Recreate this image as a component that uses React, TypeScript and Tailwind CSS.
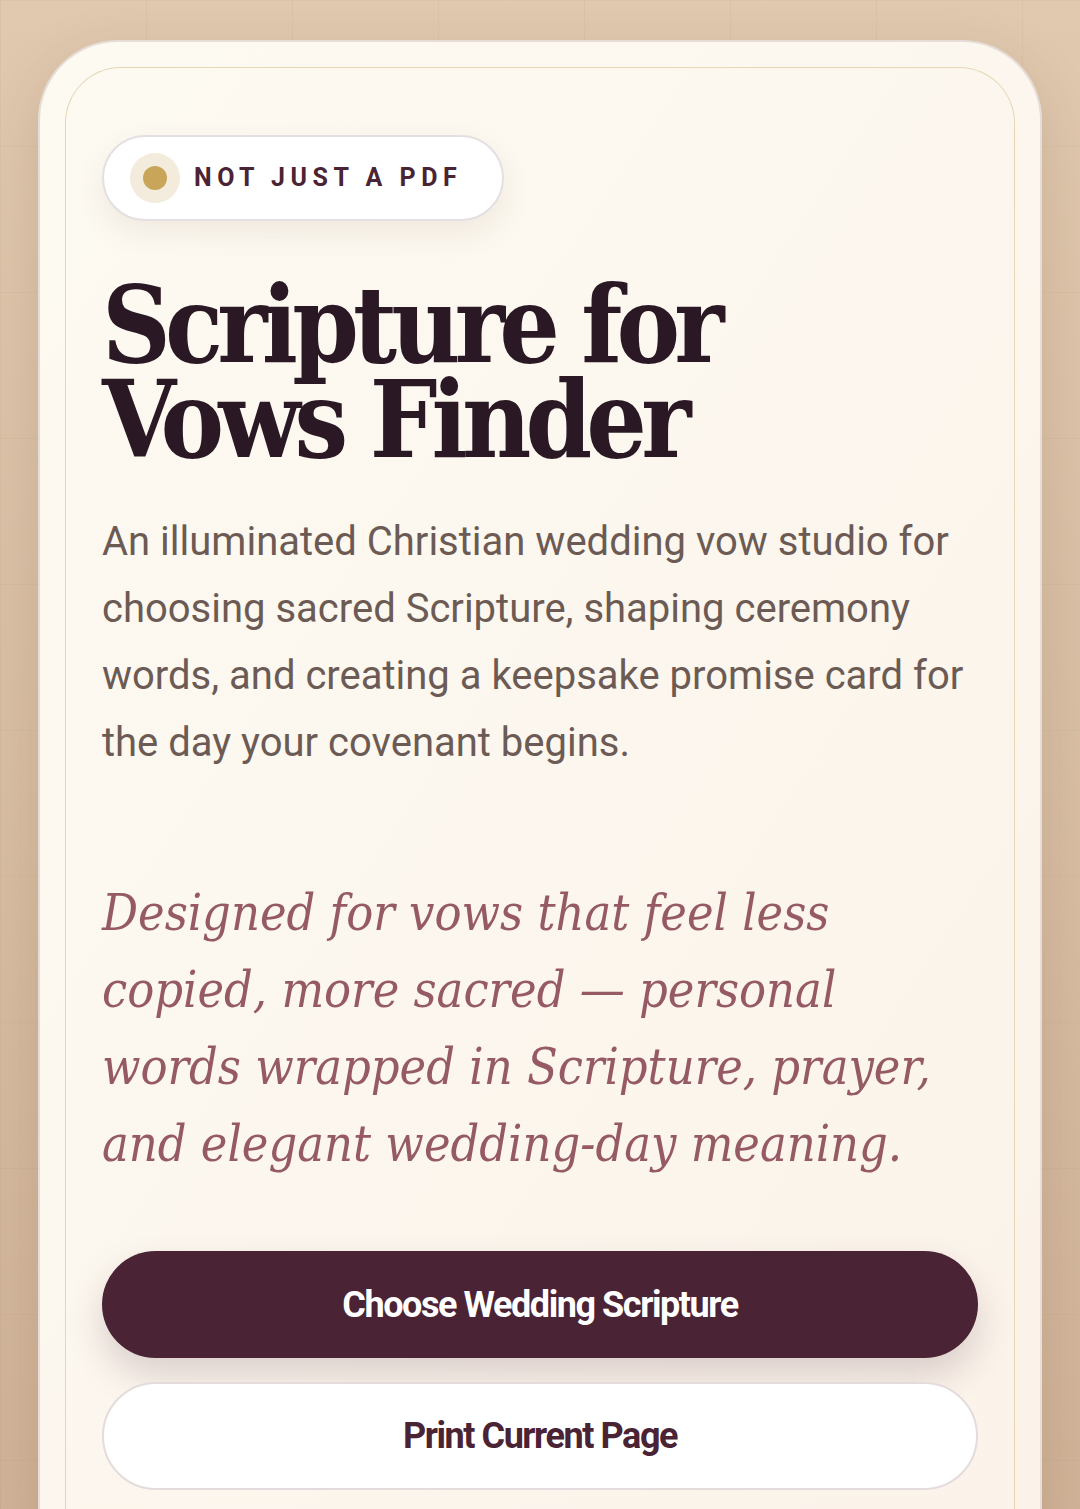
import React from "react";

export default function App() {
  return (
    <div className="relative min-h-[1509px] w-full overflow-hidden bg-gradient-to-b from-[#e0c9af] via-[#d9bfa4] to-[#d0b398]">
      <div className="pointer-events-none absolute inset-0 bg-[linear-gradient(to_right,rgba(120,80,40,0.05)_1px,transparent_1px),linear-gradient(to_bottom,rgba(120,80,40,0.04)_1px,transparent_1px)] bg-[size:146px_146px]" />
      <div className="relative px-[38px] pt-[40px]">
        <div className="rounded-t-[80px] border-2 border-b-0 border-[#e6ddd8] bg-gradient-to-br from-[#fdfaf2] to-[#fbf3ea] p-[25px] pb-0 shadow-[0_20px_60px_rgba(90,50,30,0.15)]">
          <div className="min-h-[1460px] rounded-t-[56px] border border-b-0 border-[#e5d7b5] px-[36px] pt-[67px]">
            <div className="inline-flex h-[86px] items-center rounded-full border-2 border-[#e4dfe1] bg-white pl-[26px] pr-[40px] shadow-[0_12px_30px_rgba(90,50,30,0.08)]">
              <span className="flex h-[50px] w-[50px] items-center justify-center rounded-full bg-[#f3ebdc]">
                <span className="h-[24px] w-[24px] rounded-full bg-[#c9a55a]" />
              </span>
              <span className="ml-[14px] font-['Roboto'] text-[25px] font-bold tracking-[0.22em] text-[#4a2335]">
                NOT JUST A PDF
              </span>
            </div>
            <h1 className="mt-[56px] font-['DejaVu_Serif',serif] text-[106px] font-bold leading-[95px] tracking-[-0.055em] text-[#2a1824] [font-stretch:condensed]">
              Scripture for
              <br />
              Vows Finder
            </h1>
            <p className="mt-[41px] max-w-[872px] font-['Roboto',sans-serif] text-[40px] leading-[67px] text-[#6c5b54]">
              An illuminated Christian wedding vow studio for choosing sacred Scripture, shaping ceremony words, and creating a keepsake promise card for the day your covenant begins.
            </p>
            <p className="mt-[99px] max-w-[850px] font-['DejaVu_Serif',serif] text-[50px] italic leading-[77px] text-[#955a63] [font-stretch:condensed]">
              Designed for vows that feel less copied, more sacred — personal words wrapped in Scripture, prayer, and elegant wedding-day meaning.
            </p>
            <div className="mt-[68px] flex flex-col gap-[24px]">
              <button className="h-[107px] w-full rounded-full bg-[#4a2335] font-['Roboto',sans-serif] text-[36px] font-bold tracking-[-0.04em] text-white shadow-[0_18px_36px_rgba(74,35,53,0.18)]">
                Choose Wedding Scripture
              </button>
              <button className="h-[108px] w-full rounded-full border-2 border-[#e4dcdc] bg-white font-['Roboto',sans-serif] text-[36px] font-bold tracking-[-0.04em] text-[#4a2335]">
                Print Current Page
              </button>
            </div>
          </div>
        </div>
      </div>
    </div>
  );
}
